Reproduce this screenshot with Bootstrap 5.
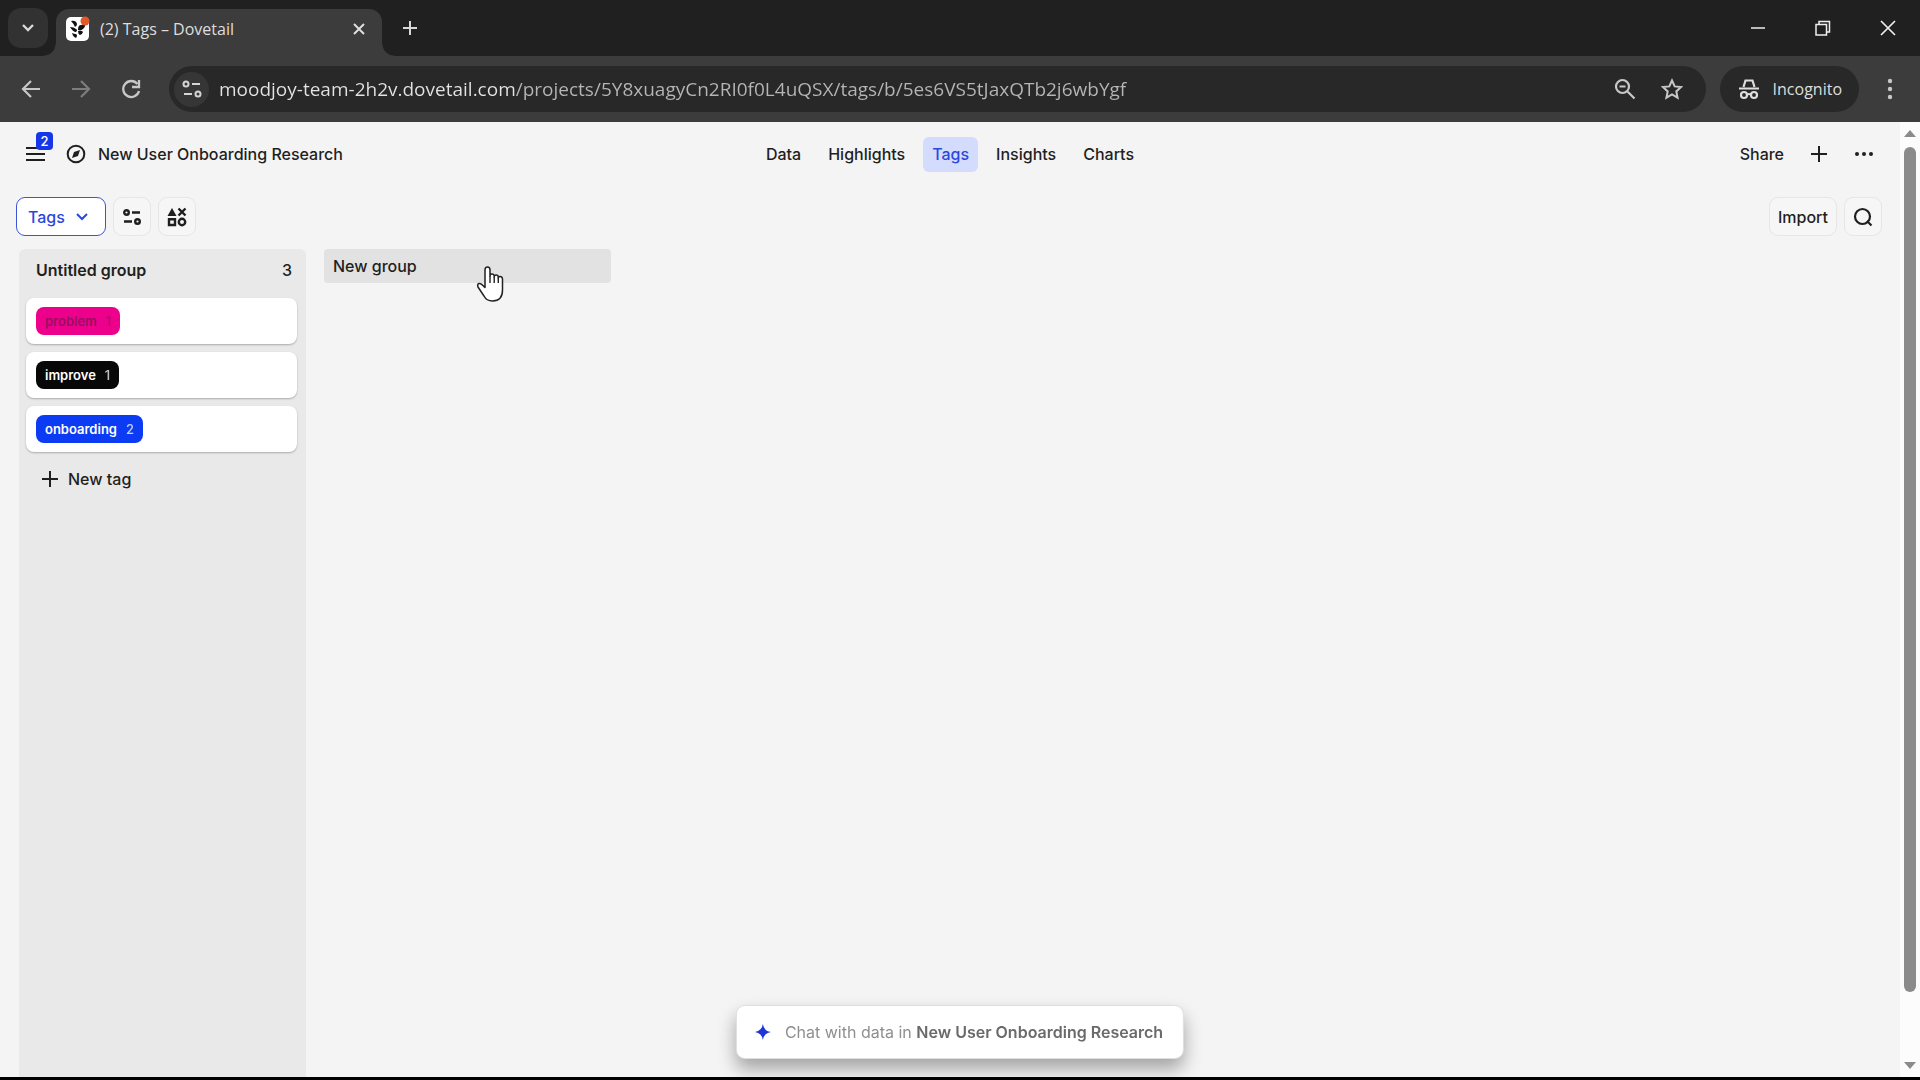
<!DOCTYPE html>
<html lang="en">
<head>
<meta charset="utf-8">
<meta name="viewport" content="width=device-width, initial-scale=1">
<title>(2) Tags – Dovetail</title>
<link href="https://cdn.jsdelivr.net/npm/bootstrap@5.3.0/dist/css/bootstrap.min.css" rel="stylesheet">
<style>
  :root { --ink: #1f1f1f; --blue: #0b35f1; }
  body { font-family: Inter, "Liberation Sans", sans-serif; font-size: 16px; line-height: 20px; font-weight: 500; color: var(--ink); background: #f4f4f4; border-bottom: 3px solid #000; }
  button, input { font: inherit; color: inherit; }
  svg { display: block; flex: none; }
  .plain { background: none; border: 0; padding: 0; }

  /* browser frame */
  .chrome-ui { font-family: "Open Sans", "Noto Sans", sans-serif; font-weight: 400; color: #dedede; }
  .tabstrip { height: 56px; background: #202020; padding-left: 8px; }
  .tab-search { width: 40px; height: 40px; margin-top: 8px; border-radius: 13px; background: #323232; }
  .tab-item { width: 326px; height: 47px; margin-left: 8px; padding: 0 14px 8px 10px; background: #3c3c3c; border-radius: 13px 13px 0 0; position: relative; }
  .tab-item::before, .tab-item::after { content: ""; position: absolute; bottom: 0; width: 12px; height: 12px; }
  .tab-item::before { right: 100%; background: radial-gradient(circle at 0 0, transparent 11px, #3c3c3c 12px); }
  .tab-item::after { left: 100%; background: radial-gradient(circle at 100% 0, transparent 11px, #3c3c3c 12px); }
  .tab-label { font-size: 16px; margin-left: 10px; }
  .win-btn { width: 65px; height: 56px; }
  .toolbar-row { height: 66px; background: #3c3c3c; padding: 0 23px 0 17px; }
  .omnibox { height: 46px; border-radius: 23px; background: #282828; padding: 0 22px 0 5px; }
  .site-info { width: 35px; height: 35px; border-radius: 50%; background: #363636; }
  /* host name is brighter than the path */
  .url-box { font-size: 19px; line-height: 28px; border: 0; outline: 0; padding: 0; min-width: 0; margin-left: 10px; background: linear-gradient(90deg, #e4e4e4 297px, #b6b6b6 297px); -webkit-background-clip: text; background-clip: text; -webkit-text-fill-color: transparent; }
  .incog { height: 46px; border-radius: 23px; background: #282828; padding: 0 17px; margin-left: 14px; font-size: 16px; }

  /* project header */
  .proj-bar { display: grid; grid-template-columns: 1fr auto 1fr; height: 64px; padding: 0 26px; align-items: center; }
  .proj-mark { margin: 0 12px 0 21px; }
  .proj-nav { gap: 9px; }
  .proj-nav a { padding: 7px 9px 8px; border-radius: 6px; color: var(--ink); text-decoration: none; }
  .proj-nav a.active { background: #d3dcfd; color: #2b48dc; }
  .proj-tools { gap: 26px; }
  .count-badge { position: absolute; left: 10px; top: -14px; width: 17px; height: 18px; border-radius: 4px; background: #1637e8; color: #fff; font-size: 13px; line-height: 18px; text-align: center; }
  .tool-line { padding: 11px 18px 13px 16px; gap: 7px; }
  .tool-btn { height: 39px; min-width: 38px; border: 1px solid #e6e6e6; border-radius: 9px; background: #f6f6f6; }
  .tool-btn.picked { background: #fff; border-color: #3c55d8; color: #2b48dc; padding: 0 16px 0 11px; gap: 10px; }
  .page-area { padding-right: 20px; }

  /* board */
  .board { padding: 0 19px; gap: 18px; }
  .group-col { width: 287px; background: #e9e9e9; border-radius: 6px 6px 0 0; padding: 0 7px; }
  .group-head { height: 49px; padding: 0 7px 7px 10px; }
  .group-title { font-weight: 600; font-size: 16px; line-height: 20px; margin: 0; }
  .tag-row { height: 46px; margin: 0 2px 0 0; padding: 0 10px; background: #fff; border-radius: 8px; box-shadow: 0 1px 2px #0004; }
  .tag-chip { height: 28px; border-radius: 8px; padding: 0 9px; gap: 9px; font-size: 13px; font-weight: 600; color: #fff; text-decoration: none; }
  .tag-chip span { font-weight: 500; opacity: .75; }
  .chip-pink { background: #ec008c; color: #98105f; }
  .chip-black { background: #080808; }
  .chip-blue { background: #0b3bf2; }
  .new-tag { padding: 17px 16px; gap: 10px; }
  .new-group { width: 287px; height: 34px; background: #e2e2e2; border-radius: 4px; padding: 0 9px; }

  .chat-bar { bottom: 21px; height: 54px; padding: 0 20px 0 18px; gap: 14px; background: #fff; border: 1px solid #dedede; border-radius: 9px; color: #8f8f8f; font-weight: 400; box-shadow: 0 10px 18px #0005; white-space: nowrap; }
  .chat-bar b { font-weight: 600; color: #6a6a6a; }
  .pointer-hand { position: fixed; left: 476px; top: 266px; }
  .scroll-rail { position: fixed; right: 0; top: 122px; bottom: 3px; width: 20px; background: #fcfcfc; padding: 8px 0; }
  .scroll-thumb { width: 12px; height: 90%; margin-top: 10px; border-radius: 6px; background: #8b8b8b; }
</style>
<script src="https://cdn.jsdelivr.net/npm/bootstrap@5.3.0/dist/js/bootstrap.bundle.min.js"></script>
</head>
<body class="d-flex flex-column min-vh-100">

<div class="chrome-ui">
  <div class="tabstrip d-flex">
    <button class="plain tab-search d-flex align-items-center justify-content-center" aria-label="Search tabs">
      <svg width="14" height="10" viewBox="0 0 14 10" fill="none" stroke="#d8d8d8" stroke-width="2.4"><path d="M2 2l5 5 5-5"/></svg>
    </button>
    <div class="tab-item d-flex align-items-center align-self-end">
      <svg width="24" height="26" viewBox="0 0 24 26"><rect y="1" width="23" height="24" rx="5" fill="#fff"/><g fill="#111"><path d="M5 5q5-1 6 3 0 2-2 3-1-3-4-6zM12 14q0-5 3-5 3 0 4-3 1 5-2 7-2 2-5 1zM4 11q4 0 6 2 2 1 0 3-3 0-6-5zM12 15q4-1 5 1-1 3-3 3-2-1-2-4zM6 17q2 1 4 1 2 1 0 4-3-1-4-5z"/></g><circle cx="19" cy="5" r="4.500" fill="#e0592b"/></svg>
      <span class="tab-label me-auto">(2) Tags – Dovetail</span>
      <button class="plain" aria-label="Close tab"><svg width="18" height="18" viewBox="0 0 18 18" stroke="#dedede" stroke-width="2"><path d="M4 4l10 10M14 4L4 14"/></svg></button>
    </div>
    <button class="plain ms-3 ps-1" aria-label="New tab"><svg width="16" height="16" viewBox="0 0 16 16" stroke="#d8d8d8" stroke-width="2"><path d="M8 1v14M1 8h14"/></svg></button>
    <div class="d-flex ms-auto">
      <button class="plain win-btn d-flex align-items-center justify-content-center" aria-label="Minimize"><svg width="16" height="16" viewBox="0 0 16 16" stroke="#eee" stroke-width="1.500"><path d="M1 8h14"/></svg></button>
      <button class="plain win-btn d-flex align-items-center justify-content-center" aria-label="Restore"><svg width="16" height="16" viewBox="0 0 16 16" stroke="#eee" stroke-width="1.500" fill="none"><path d="M1 4.500h10.500V15H1zM4 4V1.500h10.500V12H12"/></svg></button>
      <button class="plain win-btn d-flex align-items-center justify-content-center" aria-label="Close"><svg width="16" height="16" viewBox="0 0 16 16" stroke="#eee" stroke-width="1.700"><path d="M1 1l14 14M15 1L1 15"/></svg></button>
    </div>
  </div>

  <div class="toolbar-row d-flex align-items-center">
    <button class="plain" aria-label="Back"><svg width="28" height="20" viewBox="0 0 28 20" fill="none" stroke="#c8c8c8" stroke-width="2.200"><path d="M7 10h16M14 2l-8 8 8 8"/></svg></button>
    <button class="plain ms-4" aria-label="Forward"><svg width="26" height="20" viewBox="0 0 26 20" fill="none" stroke="#7d7d7d" stroke-width="2.200"><path d="M3 10h16M12 2l8 8-8 8"/></svg></button>
    <button class="plain ms-4 me-4" aria-label="Reload"><svg width="26" height="20" viewBox="0 0 26 20" fill="none" stroke="#c8c8c8" stroke-width="2.300"><path d="M18.500 5A8 8 0 1 0 20 12"/><path d="M20 1v7h-7"/></svg></button>
    <div class="omnibox d-flex align-items-center flex-grow-1">
      <button class="plain site-info d-flex align-items-center justify-content-center" aria-label="Site information">
        <svg width="20" height="18" viewBox="0 0 20 18" fill="none" stroke="#d4d4d4" stroke-width="2"><circle cx="4" cy="4" r="2.500"/><path d="M10 4h8M2 14h8"/><circle cx="16" cy="14" r="2.500"/></svg>
      </button>
      <input class="url-box flex-grow-1 me-3" aria-label="Address" value="moodjoy-team-2h2v.dovetail.com/projects/5Y8xuagyCn2RI0f0L4uQSX/tags/b/5es6VS5tJaxQTb2j6wbYgf">
      <button class="plain me-4" aria-label="Zoom"><svg width="22" height="22" viewBox="0 0 22 22" fill="none" stroke="#c8c8c8" stroke-width="2.200"><circle cx="8.500" cy="8.500" r="6.500"/><path d="M13.500 13.500l7 7M5.500 8.500h6"/></svg></button>
      <button class="plain" aria-label="Bookmark"><svg width="24" height="22" viewBox="0 0 24 22" fill="none" stroke="#c8c8c8" stroke-width="2"><path d="M12 2.500l2.700 5.900 6.300.7-4.700 4.300 1.300 6.300L12 16.500l-5.600 3.200 1.300-6.300L3 9.100l6.300-.7z"/></svg></button>
    </div>
    <button class="plain incog d-flex align-items-center gap-2">
      <svg width="24" height="22" viewBox="0 0 24 22" fill="none" stroke="#dedede" stroke-width="2.200"><path d="M6.500 9L8.500 2.500h7l2 6.500M2 10.500h20"/><circle cx="7" cy="17" r="3"/><circle cx="17" cy="17" r="3"/><path d="M10 16.500q2-1 4 0"/></svg>
      <span class="ps-1">Incognito</span>
    </button>
    <button class="plain ms-4" aria-label="Menu"><svg width="14" height="24" viewBox="0 0 14 24" fill="#c8c8c8"><circle cx="7" cy="4" r="2.200"/><circle cx="7" cy="12" r="2.200"/><circle cx="7" cy="20" r="2.200"/></svg></button>
  </div>
</div>

<main class="page-area d-flex flex-column flex-grow-1">
  <header class="proj-bar">
    <div class="d-flex align-items-center">
      <button class="plain position-relative" aria-label="Open menu, 2 notifications">
        <svg width="19" height="16" viewBox="0 0 19 16" stroke="#1f1f1f" stroke-width="2"><path d="M0 2h19M0 8h19M0 14h19"/></svg>
        <span class="count-badge">2</span>
      </button>
      <svg class="proj-mark" width="20" height="20" viewBox="0 0 20 20"><circle cx="10" cy="10" r="8.300" fill="none" stroke="#1f1f1f" stroke-width="2"/><path d="M14 6l-2 6-6 2 2-6z" fill="#1f1f1f"/></svg>
      <span>New User Onboarding Research</span>
    </div>
    <nav class="proj-nav d-flex">
      <a href="#">Data</a>
      <a href="#">Highlights</a>
      <a href="#" class="active" aria-current="page">Tags</a>
      <a href="#">Insights</a>
      <a href="#">Charts</a>
    </nav>
    <div class="proj-tools d-flex align-items-center justify-content-end">
      <button class="plain">Share</button>
      <button class="plain" aria-label="Add"><svg width="18" height="18" viewBox="0 0 18 18" stroke="#1f1f1f" stroke-width="2"><path d="M9 1v16M1 9h16"/></svg></button>
      <button class="plain" aria-label="More"><svg width="20" height="6" viewBox="0 0 20 6" fill="#1f1f1f"><circle cx="3" cy="3" r="2"/><circle cx="10" cy="3" r="2"/><circle cx="17" cy="3" r="2"/></svg></button>
    </div>
  </header>

  <div class="tool-line d-flex align-items-center">
    <button class="tool-btn picked d-flex align-items-center">Tags
      <svg width="14" height="9" viewBox="0 0 14 9" fill="none" stroke="#2b48dc" stroke-width="2"><path d="M2 2l5 5 5-5"/></svg></button>
    <button class="tool-btn p-0 d-flex align-items-center justify-content-center" aria-label="Filter"><svg width="20" height="18" viewBox="0 0 20 18" fill="none" stroke="#1f1f1f" stroke-width="2.400"><circle cx="4.500" cy="4.500" r="2.300"/><path d="M10 4.500h8M2 13.500h8"/><circle cx="15.500" cy="13.500" r="2.300"/></svg></button>
    <button class="tool-btn p-0 d-flex align-items-center justify-content-center" aria-label="Group by"><svg width="20" height="20" viewBox="0 0 20 20" fill="none" stroke="#1f1f1f" stroke-width="2.400"><path d="M5 1L9.500 9h-9z" fill="#1f1f1f" stroke="none"/><path d="M11.500 1.500l7 7M18.500 1.500l-7 7M2 12.200h6v5.800H2z"/><circle cx="15" cy="15" r="3.200"/></svg></button>
    <button class="tool-btn ms-auto px-2">Import</button>
    <button class="tool-btn p-0 d-flex align-items-center justify-content-center" aria-label="Search"><svg width="20" height="20" viewBox="0 0 20 20" fill="none" stroke="#1f1f1f" stroke-width="2.200"><circle cx="9.500" cy="9.500" r="7.500"/><path d="M14 14l4.500 4.500"/></svg></button>
  </div>

  <div class="board d-flex flex-grow-1">
    <section class="group-col">
      <div class="group-head d-flex align-items-center justify-content-between">
        <h2 class="group-title">Untitled group</h2><span>3</span>
      </div>
      <div class="d-flex flex-column gap-2">
        <div class="tag-row d-flex align-items-center"><a href="#" class="tag-chip chip-pink d-flex align-items-center">problem <span>1</span></a></div>
        <div class="tag-row d-flex align-items-center"><a href="#" class="tag-chip chip-black d-flex align-items-center">improve <span>1</span></a></div>
        <div class="tag-row d-flex align-items-center"><a href="#" class="tag-chip chip-blue d-flex align-items-center">onboarding <span>2</span></a></div>
      </div>
      <button class="plain new-tag d-flex align-items-center"><svg width="16" height="16" viewBox="0 0 16 16" stroke="#1f1f1f" stroke-width="2"><path d="M8 0v16M0 8h16"/></svg>New tag</button>
    </section>
    <button class="plain new-group text-start">New group</button>
  </div>
</main>

<button class="chat-bar position-fixed start-50 translate-middle-x d-flex align-items-center">
  <svg width="16" height="16" viewBox="0 0 16 16"><path d="M8 0q1 7 8 8-7 1-8 8-1-7-8-8 7-1 8-8z" fill="#1f35d8"/></svg>
  <span>Chat with data in <b>New User Onboarding Research</b></span>
</button>

<div class="scroll-rail d-flex flex-column align-items-center" aria-hidden="true">
  <svg width="12" height="7" viewBox="0 0 12 7"><path d="M0 7l6-7 6 7z" fill="#8b8b8b"/></svg>
  <div class="scroll-thumb"></div>
  <svg class="mt-auto" width="12" height="7" viewBox="0 0 12 7"><path d="M0 0l6 7 6-7z" fill="#8b8b8b"/></svg>
</div>

<svg class="pointer-hand" width="28" height="36" viewBox="0 0 28 36" aria-hidden="true"><path d="M9 21V4q0-3 2.500-3T14 4v6q0-2 2-2t2.200 2v1q0-2 2-2t2 2v1q0-1.500 2-1.500T26.500 13v11q0 11-10 11-6 0-8.500-5L2 21q-1-3 1-3.500 2-.5 6 4z" fill="#fff" stroke="#222" stroke-width="1.500" stroke-linejoin="round"/><path d="M14 10v7M18.200 11v6M22.300 12v5" stroke="#222" stroke-width="1.400"/></svg>
</body>
</html>
